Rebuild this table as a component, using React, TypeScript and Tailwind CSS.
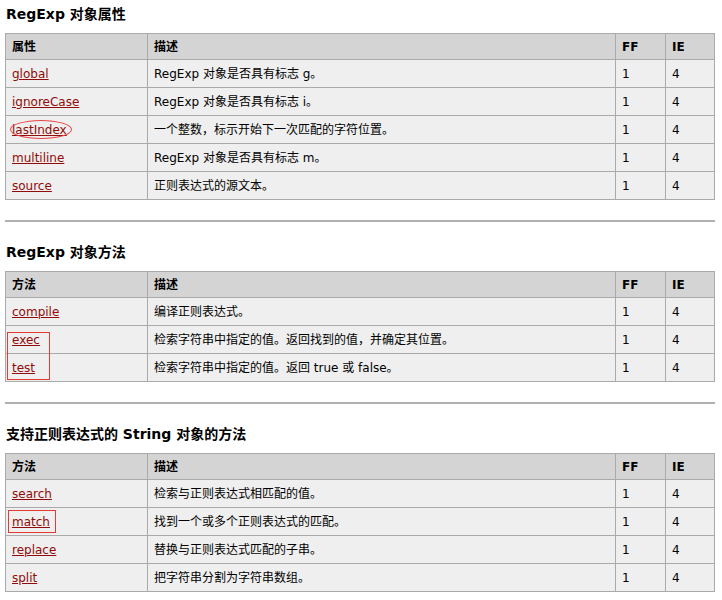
import type { ReactNode } from 'react'

type Row = { name: string; desc: ReactNode; ff: string; ie: string }

const FONT = "font-['Verdana','DejaVu_Sans','Noto_Sans_CJK_SC',sans-serif]"

const PROPS: Row[] = [
  { name: 'global', desc: 'RegExp 对象是否具有标志 g。', ff: '1', ie: '4' },
  { name: 'ignoreCase', desc: 'RegExp 对象是否具有标志 i。', ff: '1', ie: '4' },
  { name: 'lastIndex', desc: '一个整数，标示开始下一次匹配的字符位置。', ff: '1', ie: '4' },
  { name: 'multiline', desc: 'RegExp 对象是否具有标志 m。', ff: '1', ie: '4' },
  { name: 'source', desc: '正则表达式的源文本。', ff: '1', ie: '4' },
]

const METHODS: Row[] = [
  { name: 'compile', desc: '编译正则表达式。', ff: '1', ie: '4' },
  { name: 'exec', desc: '检索字符串中指定的值。返回找到的值，并确定其位置。', ff: '1', ie: '4' },
  { name: 'test', desc: '检索字符串中指定的值。返回 true 或 false。', ff: '1', ie: '4' },
]

const STRING_METHODS: Row[] = [
  { name: 'search', desc: '检索与正则表达式相匹配的值。', ff: '1', ie: '4' },
  { name: 'match', desc: '找到一个或多个正则表达式的匹配。', ff: '1', ie: '4' },
  { name: 'replace', desc: '替换与正则表达式匹配的子串。', ff: '1', ie: '4' },
  { name: 'split', desc: '把字符串分割为字符串数组。', ff: '1', ie: '4' },
]

const COLS = 'grid grid-cols-[142px_468px_50px_49px]'
const CELL = 'flex items-center border-r border-b border-[#aaaaaa] pl-[6px]'

function RefTable({ first, rows, overlay }: { first: string; rows: Row[]; overlay?: ReactNode }) {
  return (
    <div className={`relative w-[710px] border-l border-t border-[#aaaaaa] ${COLS}`}>
      {[first, '描述', 'FF', 'IE'].map((h) => (
        <div key={h} className={`${CELL} h-[26px] bg-[#d4d4d4] font-bold text-black`}>
          {h}
        </div>
      ))}
      {rows.map((r) => (
        <div key={r.name} className="contents">
          <div className={`${CELL} h-[28px] bg-[#efefef]`}>
            <a href="#" className="text-[#900b09] underline">
              {r.name}
            </a>
          </div>
          <div className={`${CELL} h-[28px] bg-[#efefef] text-black`}>{r.desc}</div>
          <div className={`${CELL} h-[28px] bg-[#efefef] text-black`}>{r.ff}</div>
          <div className={`${CELL} h-[28px] bg-[#efefef] text-black`}>{r.ie}</div>
        </div>
      ))}
      {overlay}
    </div>
  )
}

function Title({ children, first }: { children: ReactNode; first?: boolean }) {
  return (
    <h2 className={`${first ? 'mt-[5px]' : 'mt-[21px]'} mb-[10px] pl-px text-[14px] leading-[18px] font-bold text-black`}>
      {children}
    </h2>
  )
}

export default function App() {
  return (
    <div className={`min-h-[600px] w-[722px] bg-white px-[5px] text-[12px] ${FONT}`}>
      <Title first>RegExp 对象属性</Title>
      <RefTable
        first="属性"
        rows={PROPS}
        overlay={
          <span className="pointer-events-none absolute top-[86px] left-[4px] h-[19px] w-[62px] rounded-[50%] border border-[#e84646]" />
        }
      />
      <hr className="mt-[20px] w-[710px] border-t-2 border-[#b0b0b0]" />

      <Title>RegExp 对象方法</Title>
      <RefTable
        first="方法"
        rows={METHODS}
        overlay={
          <span className="pointer-events-none absolute top-[60px] left-[1px] h-[48px] w-[43px] border border-[#e53935]" />
        }
      />
      <hr className="mt-[20px] w-[710px] border-t-2 border-[#b0b0b0]" />

      <Title>支持正则表达式的 String 对象的方法</Title>
      <RefTable
        first="方法"
        rows={STRING_METHODS}
        overlay={
          <span className="pointer-events-none absolute top-[56px] left-[2px] h-[23px] w-[48px] border border-[#e53935]" />
        }
      />
    </div>
  )
}
